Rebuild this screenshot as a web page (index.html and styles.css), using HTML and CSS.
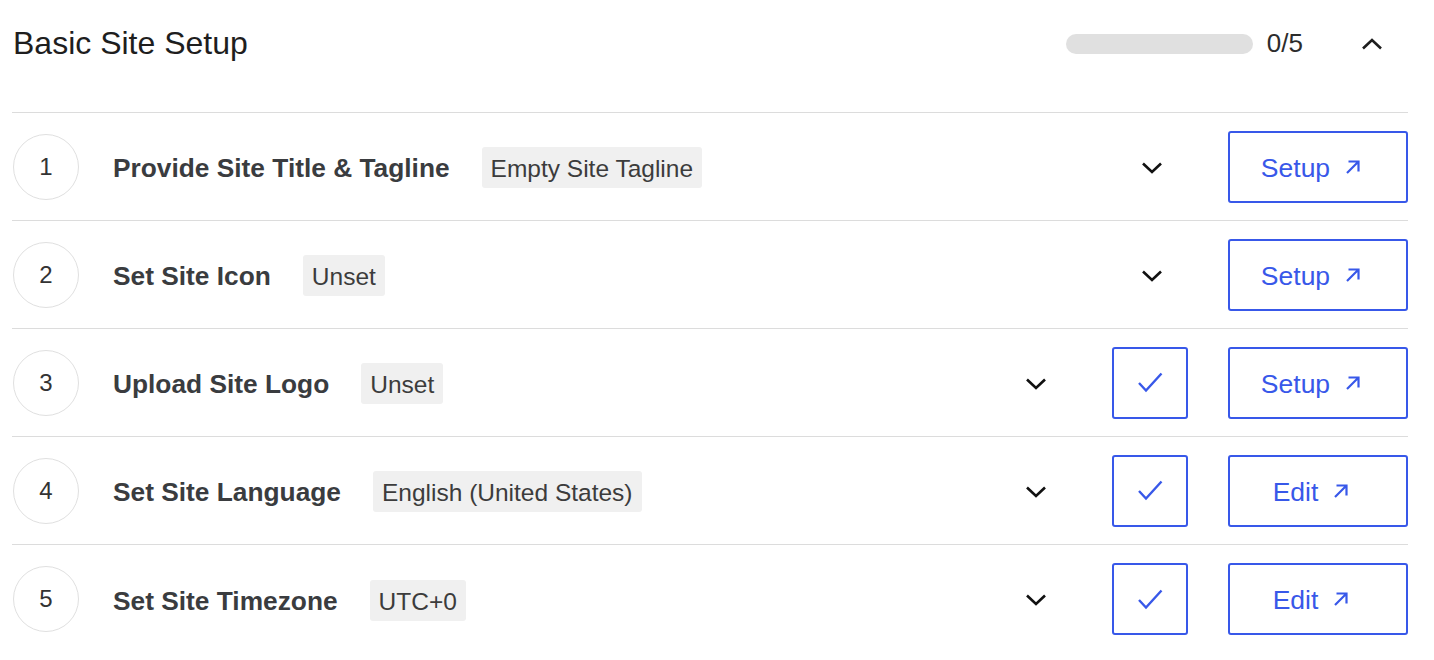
FILE: index.html
```html
<!DOCTYPE html>
<html lang="en">
<head>
<meta charset="utf-8">
<title>Basic Site Setup</title>
<link rel="stylesheet" href="styles.css">
</head>
<body>
<section class="panel">
  <header class="panel-head">
    <h2 class="panel-title">Basic Site Setup</h2>
    <div class="progress">
      <div class="progress-bar"></div>
      <span class="progress-count">0/5</span>
    </div>
    <button class="collapse" aria-label="Collapse">
      <svg width="22" height="12" viewBox="0 0 22 12"><path d="M2 10.5 L11 2 L20 10.5" fill="none" stroke="#1e1e1e" stroke-width="2.6"/></svg>
    </button>
  </header>
  <ul class="steps">
    <li class="step">
      <span class="step-num">1</span>
      <span class="step-title">Provide Site Title &amp; Tagline</span>
      <span class="step-badge">Empty Site Tagline</span>
      <span class="step-toggle"><svg width="22" height="12" viewBox="0 0 22 12"><path d="M2 1.5 L11 10 L20 1.5" fill="none" stroke="#111" stroke-width="2.6"/></svg></span>
      <a class="btn btn-action" href="#">Setup<svg class="ext" width="14" height="14" viewBox="0 0 14 14"><path d="M1 13 L12.5 1.5 M2.5 1.5 H12.5 V11.5" fill="none" stroke="currentColor" stroke-width="2.2"/></svg></a>
    </li>
    <li class="step">
      <span class="step-num">2</span>
      <span class="step-title">Set Site Icon</span>
      <span class="step-badge">Unset</span>
      <span class="step-toggle"><svg width="22" height="12" viewBox="0 0 22 12"><path d="M2 1.5 L11 10 L20 1.5" fill="none" stroke="#111" stroke-width="2.6"/></svg></span>
      <a class="btn btn-action" href="#">Setup<svg class="ext" width="14" height="14" viewBox="0 0 14 14"><path d="M1 13 L12.5 1.5 M2.5 1.5 H12.5 V11.5" fill="none" stroke="currentColor" stroke-width="2.2"/></svg></a>
    </li>
    <li class="step">
      <span class="step-num">3</span>
      <span class="step-title">Upload Site Logo</span>
      <span class="step-badge">Unset</span>
      <span class="step-toggle"><svg width="22" height="12" viewBox="0 0 22 12"><path d="M2 1.5 L11 10 L20 1.5" fill="none" stroke="#111" stroke-width="2.6"/></svg></span>
      <button class="btn btn-check" aria-label="Mark complete"><svg width="26" height="21" viewBox="0 0 26 21"><path d="M2 11 L9 18.5 L24.5 1.5" fill="none" stroke="currentColor" stroke-width="2.4"/></svg></button>
      <a class="btn btn-action" href="#">Setup<svg class="ext" width="14" height="14" viewBox="0 0 14 14"><path d="M1 13 L12.5 1.5 M2.5 1.5 H12.5 V11.5" fill="none" stroke="currentColor" stroke-width="2.2"/></svg></a>
    </li>
    <li class="step">
      <span class="step-num">4</span>
      <span class="step-title">Set Site Language</span>
      <span class="step-badge">English (United States)</span>
      <span class="step-toggle"><svg width="22" height="12" viewBox="0 0 22 12"><path d="M2 1.5 L11 10 L20 1.5" fill="none" stroke="#111" stroke-width="2.6"/></svg></span>
      <button class="btn btn-check" aria-label="Mark complete"><svg width="26" height="21" viewBox="0 0 26 21"><path d="M2 11 L9 18.5 L24.5 1.5" fill="none" stroke="currentColor" stroke-width="2.4"/></svg></button>
      <a class="btn btn-action" href="#">Edit<svg class="ext" width="14" height="14" viewBox="0 0 14 14"><path d="M1 13 L12.5 1.5 M2.5 1.5 H12.5 V11.5" fill="none" stroke="currentColor" stroke-width="2.2"/></svg></a>
    </li>
    <li class="step">
      <span class="step-num">5</span>
      <span class="step-title">Set Site Timezone</span>
      <span class="step-badge">UTC+0</span>
      <span class="step-toggle"><svg width="22" height="12" viewBox="0 0 22 12"><path d="M2 1.5 L11 10 L20 1.5" fill="none" stroke="#111" stroke-width="2.6"/></svg></span>
      <button class="btn btn-check" aria-label="Mark complete"><svg width="26" height="21" viewBox="0 0 26 21"><path d="M2 11 L9 18.5 L24.5 1.5" fill="none" stroke="currentColor" stroke-width="2.4"/></svg></button>
      <a class="btn btn-action" href="#">Edit<svg class="ext" width="14" height="14" viewBox="0 0 14 14"><path d="M1 13 L12.5 1.5 M2.5 1.5 H12.5 V11.5" fill="none" stroke="currentColor" stroke-width="2.2"/></svg></a>
    </li>
  </ul>
</section>
</body>
</html>
```

FILE: styles.css
```css
* { box-sizing: border-box; }

body {
  margin: 0;
  background: #fff;
  font-family: "Liberation Sans", Arial, sans-serif;
  color: #1e1e1e;
}

.panel {
  width: 1408px;
  padding-left: 12px;
}

.panel-head {
  display: flex;
  align-items: center;
  height: 113px;
  padding-bottom: 25px;
  border-bottom: 1px solid #dcdcdc;
}

.panel-title {
  margin: 0 0 0 1px;
  font-size: 32px;
  font-weight: 400;
  color: #1e1e1e;
  flex: 1;
}

.progress {
  display: flex;
  align-items: center;
  gap: 14px;
}

.progress-bar {
  width: 187px;
  height: 20px;
  border-radius: 10px;
  background: #e0e0e0;
}

.progress-count {
  font-size: 26px;
  color: #2c2c2c;
}

.collapse {
  margin-left: 58px;
  margin-right: 25px;
  padding: 0;
  border: 0;
  background: none;
  display: flex;
}

.steps {
  list-style: none;
  margin: 0;
  padding: 0;
}

.step {
  display: flex;
  align-items: center;
  height: 108px;
  padding-left: 1px;
  border-bottom: 1px solid #dcdcdc;
}

.step:last-child {
  border-bottom: 0;
}

.step-num {
  width: 66px;
  height: 66px;
  flex: none;
  border: 1px solid #e0e0e0;
  border-radius: 50%;
  display: flex;
  align-items: center;
  justify-content: center;
  font-size: 24px;
  color: #333;
  margin-right: 34px;
}

.step-title {
  font-size: 26.3px;
  font-weight: 700;
  color: #3a3c3f;
  margin-right: 32px;
  padding-top: 4px;
}

.step-badge {
  height: 41px;
  padding: 3px 9px 0;
  margin-top: 2px;
  display: flex;
  align-items: center;
  background: #f0f0f0;
  border-radius: 3px;
  font-size: 24.5px;
  color: #3c3c3c;
  margin-right: auto;
}

.step-toggle {
  width: 22px;
  display: flex;
  margin-right: 65px;
  margin-top: 2px;
}

.btn {
  height: 72px;
  border: 2px solid #3858e9;
  border-radius: 3px;
  background: #fff;
  color: #3858e9;
  display: flex;
  align-items: center;
  justify-content: center;
  text-decoration: none;
  padding: 0;
}

.btn-check {
  width: 76px;
  margin-right: 40px;
}

.btn-action {
  width: 180px;
  padding: 3px 15px 0 0;
  font-size: 26.5px;
  font-family: "Liberation Sans", Arial, sans-serif;
}

.ext {
  margin-left: 16px;
  margin-top: -3px;
}
```
